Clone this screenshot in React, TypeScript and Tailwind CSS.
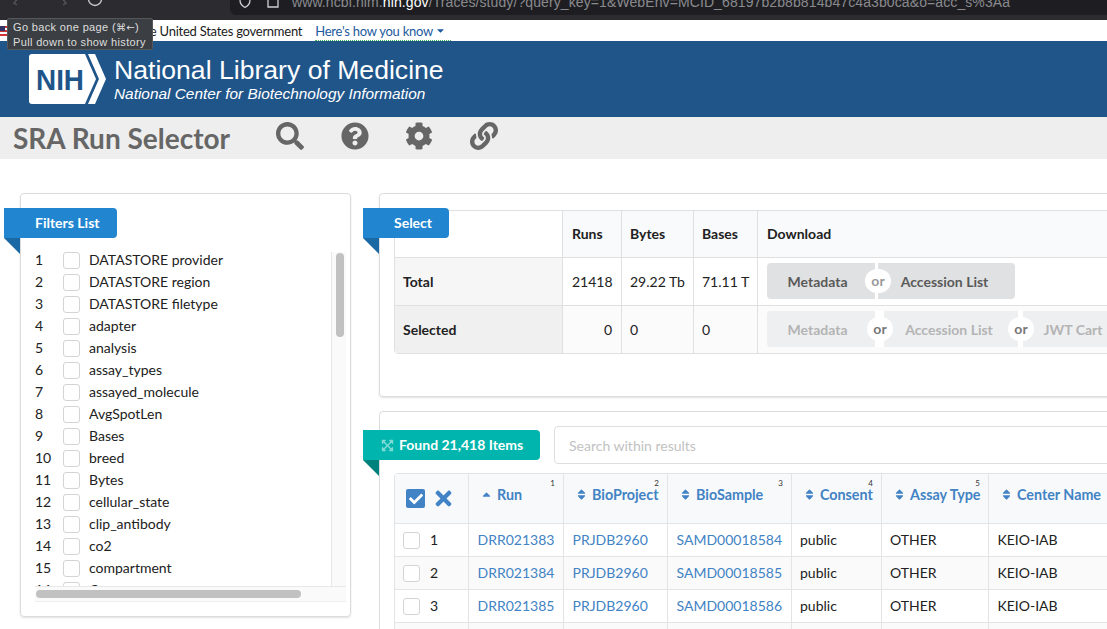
import { FaSearch, FaQuestionCircle, FaCog, FaLink, FaTimes, FaCheck, FaSort, FaSortUp, FaExpandArrowsAlt, FaCaretDown } from "react-icons/fa";

const filters = [
  "DATASTORE provider",
  "DATASTORE region",
  "DATASTORE filetype",
  "adapter",
  "analysis",
  "assay_types",
  "assayed_molecule",
  "AvgSpotLen",
  "Bases",
  "breed",
  "Bytes",
  "cellular_state",
  "clip_antibody",
  "co2",
  "compartment",
  "Consent",
];

const rows = [
  ["DRR021383", "SAMD00018584"],
  ["DRR021384", "SAMD00018585"],
  ["DRR021385", "SAMD00018586"],
  ["DRR021386", "SAMD00018587"],
];

function Check() {
  return <span className="block size-[17px] shrink-0 rounded-[3px] border border-[#d4d4d5] bg-white" />;
}

function Ribbon({ dark, bg, className, children }: { dark: string; bg: string; className: string; children: React.ReactNode }) {
  return (
    <div className={`absolute z-10 ${className}`}>
      <div className={`flex h-[30px] items-center rounded-r-[4px] text-sm font-bold text-white ${bg}`}>{children}</div>
      <div className={`h-4 w-4 [clip-path:polygon(0_0,100%_0,100%_100%)] ${dark}`} />
    </div>
  );
}

function Or({ className, dim }: { className: string; dim?: boolean }) {
  return (
    <span className={`z-10 flex h-6 w-[26px] shrink-0 items-center justify-center rounded-full bg-white text-sm ${className} ${dim ? "text-[#777]" : "text-[#999]"}`}>
      or
    </span>
  );
}

function HeadCell({ label, n, sorted }: { label: string; n?: number; sorted?: boolean }) {
  return (
    <th className="relative border-r border-[#e3e4e5] p-0 pb-[7px] text-left align-middle">
      <div className="flex items-center gap-[4px] pl-[11px] whitespace-nowrap text-[14.300px] font-bold text-[#4183c4]">
        {sorted ? <FaSortUp className="mt-[6px] size-[13px]" /> : <FaSort className="size-[13px]" />}
        {label}
      </div>
      {n && <span className="absolute top-[4px] right-[8px] text-[8px] leading-[10px] font-normal text-[#333]">{n}</span>}
    </th>
  );
}

export default function App() {
  return (
    <div className="relative h-[629px] w-[1107px] overflow-hidden bg-white font-['Lato',sans-serif] text-sm text-[#212121]">
      {/* browser chrome, cut off at the top */}
      <div className="flex h-5 items-start overflow-hidden bg-[#2b2b30]">
        <svg width="230" height="20" className="shrink-0 text-[#55555a]" fill="none" stroke="currentColor" strokeWidth="1.4">
          <path d="M20-4l-6 7 3 2" />
          <path d="M60-4l6 7-3 2" />
          <circle cx="95" cy="-1" r="6.5" stroke="#c8c8c8" />
        </svg>
        <div className="flex h-[15px] flex-1 items-start overflow-hidden rounded-bl-[6px] bg-[#1e1e22]">
          <svg width="62" height="15" className="shrink-0" fill="none" stroke="#d0d0d0" strokeWidth="1.3">
            <path d="M10-2v2c0 4 2 6 5 7.500c3-1.500 5-3.500 5-7.500v-2" />
            <path d="M38-2v9h10v-9" />
          </svg>
          <div className="-mt-[6px] whitespace-nowrap font-['Liberation_Sans',sans-serif] text-[14px] leading-[16px] tracking-[0.1px] text-[#8a8a8e]">
            www.ncbi.nlm.<span className="text-white">nih.gov</span>/Traces/study/?query_key=1&amp;WebEnv=MCID_68197b2b8b814b47c4a3b0ca&amp;o=acc_s%3Aa
          </div>
        </div>
      </div>

      {/* gov banner */}
      <div className="flex h-[21px] w-[451px] items-center justify-between bg-white pt-[1px] text-[13px] tracking-[-0.25px]">
        <svg width="8" height="10" viewBox="0 0 8 10" className="shrink-0">
          <rect width="8" height="10" fill="#c33" />
          <rect y="2" width="8" height="2" fill="#fff" />
          <rect y="6" width="8" height="2" fill="#fff" />
          <rect width="5" height="5" fill="#336" />
        </svg>
        <div className="flex items-center whitespace-nowrap">
          <span className="mr-[13px] text-[#1b1b1b]">An official website of the United States government</span>
          <span className="flex items-center gap-[2px] border-b border-dotted border-[#3fb34f] pr-[5px] leading-[18px] text-[#1d5a9e]">
            Here's how you know <FaCaretDown className="size-[11px]" />
          </span>
        </div>
      </div>

      {/* NLM header */}
      <div className="flex h-[76px] items-center bg-[#20558a] pl-[29px] font-['Liberation_Sans',sans-serif] text-white">
        <svg width="78" height="50" viewBox="0 0 78 50" className="mr-[7px] shrink-0">
          <path d="M3 0H56L67 25L56 50H3C1 50 0 49 0 47V3C0 1 1 0 3 0Z" fill="#fff" />
          <path d="M59 0H66L77 25L66 50H59L70 25Z" fill="#fff" />
          <text x="7" y="36" fontSize="30" fontWeight="700" fontFamily="Liberation Sans" fill="#20558a" textLength="48" lengthAdjust="spacingAndGlyphs">NIH</text>
        </svg>
        <div className="-mt-[1px]">
          <div className="text-[26.600px] leading-[30px] whitespace-nowrap">National Library of Medicine</div>
          <div className="text-[15.400px] leading-[18px] whitespace-nowrap italic">National Center for Biotechnology Information</div>
        </div>
      </div>

      {/* title bar */}
      <div className="flex h-[42px] items-center bg-[#eeeeee] pl-[13px] text-[#666666]">
        <h1 className="w-[263px] text-[28px] font-bold whitespace-nowrap">SRA Run Selector</h1>
        <div className="-mt-[4px] flex items-center gap-[36.500px]">
          <FaSearch className="size-[28px]" />
          <FaQuestionCircle className="size-[28px]" />
          <FaCog className="size-[28px]" />
          <FaLink className="size-[28px]" />
        </div>
      </div>

      {/* body */}
      <div className="flex items-start gap-[28px] pt-[34px] pl-5">
        <div className="relative h-[424px] w-[331px] shrink-0 rounded-[4px] border border-[#dcdcdc] shadow-[0_1px_2px_rgba(0,0,0,0.12)]">
          <Ribbon dark="bg-[#1a69a4]" bg="bg-[#2185d0] pl-[31px] pr-[17px]" className="-left-[17px] top-[14px]">Filters List</Ribbon>
          <div className="ml-[14px] mt-[58px] w-[311px]">
            <div className="flex h-[335px] w-[311px] border-b border-[#e8e8e8]">
              <div className="h-full flex-1 overflow-hidden border-r border-[#e8e8e8]">
                <div className="-mt-[3px]">
                  {filters.map((name, i) => (
                    <div key={name} className="flex h-[22px] items-center">
                      <span className="w-7">{i + 1}</span>
                      <Check />
                      <span className="ml-[9px] whitespace-nowrap">{name}</span>
                    </div>
                  ))}
                </div>
              </div>
              <div className="w-[14px] shrink-0 bg-[#fafafa] pl-[4px] pt-px">
                <div className="h-[84px] w-2 rounded-full bg-[#c1c1c1]" />
              </div>
            </div>
            <div className="h-[15px] border-b border-[#eeeeee] bg-[#fafafa] pl-px pt-[3px]">
              <div className="h-2 w-[265px] rounded-full bg-[#c1c1c1]" />
            </div>
          </div>
        </div>

        <div className="flex w-[781px] shrink-0 flex-col gap-[14px]">
          <div className="relative h-[204px] rounded-[4px] border border-[#dcdcdc] pl-[14px] pt-4 shadow-[0_1px_2px_rgba(0,0,0,0.12)]">
            <Ribbon dark="bg-[#1a69a4]" bg="bg-[#2185d0] pl-[31px] pr-[17px]" className="-left-[17px] top-[14px]">Select</Ribbon>
            <table className="w-[766px] table-fixed border-separate border-spacing-0 rounded-[4px] border border-[#dfe0e1]">
              <colgroup>
                <col className="w-[168px]" />
                <col className="w-[59px]" />
                <col className="w-[72px]" />
                <col className="w-[64px]" />
                <col />
              </colgroup>
              <tbody>
                <tr className="h-[46px] font-bold [&>td]:pb-px">
                  <td className="border-r border-[#dfe0e1]" />
                  <td className="border-r border-[#dfe0e1] bg-[#f9fafb] pl-[9px]">Runs</td>
                  <td className="border-r border-[#dfe0e1] bg-[#f9fafb] pl-2">Bytes</td>
                  <td className="border-r border-[#dfe0e1] bg-[#f9fafb] pl-2">Bases</td>
                  <td className="bg-[#f9fafb] pl-[9px]">Download</td>
                </tr>
                <tr className="h-[48px]">
                  <td className="border-t border-r border-[#dfe0e1] bg-[#f6f6f6] pl-2 font-bold">Total</td>
                  <td className="border-t border-r border-[#dfe0e1] pl-[9px]">21418</td>
                  <td className="border-t border-r border-[#dfe0e1] pl-2 whitespace-nowrap">29.22 Tb</td>
                  <td className="border-t border-r border-[#dfe0e1] pl-2 whitespace-nowrap">71.11 T</td>
                  <td className="border-t border-[#dfe0e1] pb-px pl-[9px]">
                    <div className="flex h-9 items-center font-bold text-[#5a5a5a]">
                      <span className="flex h-full w-[108px] items-center justify-center rounded-l-[4px] bg-[#e0e1e2] pt-px pr-[7px]">Metadata</span>
                      <span className="h-full w-[3px] bg-white" />
                      <Or className="-mx-[13px]" />
                      <span className="flex h-full w-[137px] items-center justify-center rounded-r-[4px] bg-[#e0e1e2] pt-px pr-[4px]">Accession List</span>
                    </div>
                  </td>
                </tr>
                <tr className="h-[48px]">
                  <td className="border-t border-r border-[#dfe0e1] bg-[#f0f0f0] pl-2 font-bold">Selected</td>
                  <td className="border-t border-r border-[#dfe0e1] bg-[#fbfbfb] pr-[9px] text-right">0</td>
                  <td className="border-t border-r border-[#dfe0e1] bg-[#fbfbfb] pl-2">0</td>
                  <td className="border-t border-r border-[#dfe0e1] bg-[#fbfbfb] pl-2">0</td>
                  <td className="border-t border-[#dfe0e1] bg-[#fbfbfb] pb-px pl-[9px]">
                    <div className="flex h-9 items-center font-bold whitespace-nowrap text-[#b4b4b5]">
                      <span className="flex h-full w-[108px] items-center justify-center rounded-l-[4px] bg-[#eeeff0] pt-px pr-[7px]">Metadata</span>
                      <span className="h-full w-[9px] bg-white" />
                      <Or dim className="-ml-[17px] -mr-[9px]" />
                      <span className="flex h-full w-[134px] items-center justify-center bg-[#eeeff0] pt-px pr-[4px]">Accession List</span>
                      <span className="h-full w-[5px] bg-white" />
                      <Or dim className="-ml-[15px] -mr-[11px]" />
                      <span className="flex h-full w-[100px] items-center justify-center rounded-r-[4px] bg-[#eeeff0] pt-px">JWT Cart</span>
                    </div>
                  </td>
                </tr>
              </tbody>
            </table>
          </div>

          <div className="relative h-[260px] rounded-[4px] border border-[#dcdcdc] pl-[14px] pt-[14px]">
            <Ribbon dark="bg-[#00827c]" bg="bg-[#00b5ad] pl-[18px] pr-[17px] gap-[5px]" className="-left-[17px] top-[18px]">
              <FaExpandArrowsAlt className="size-[13px] text-[#80dad6]" />
              Found 21,418 Items
            </Ribbon>
            <div className="ml-[160px] flex h-[38px] w-[640px] items-center rounded-[4px] border border-[#dedede] pl-[14px] pt-px text-[#c2c2c2]">
              Search within results
            </div>
            <table className="mt-[9px] w-[766px] table-fixed border-separate border-spacing-0 rounded-t-[4px] border-t border-l border-[#e3e4e5]">
              <colgroup>
                <col className="w-[74px]" />
                <col className="w-[95px]" />
                <col className="w-[104px]" />
                <col className="w-[124px]" />
                <col className="w-[90px]" />
                <col className="w-[107px]" />
                <col />
              </colgroup>
              <thead className="bg-[#f8f9fb]">
                <tr className="h-[49px]">
                  <th className="border-r border-[#e3e4e5] p-0">
                    <div className="flex items-center pl-[11px]">
                      <span className="flex size-[19px] items-center justify-center rounded-[2px] bg-[#4183c4] text-white">
                        <FaCheck className="size-[14px]" />
                      </span>
                      <FaTimes className="ml-[7px] size-[23px] text-[#4183c4]" />
                    </div>
                  </th>
                  <HeadCell label="Run" n={1} sorted />
                  <HeadCell label="BioProject" n={2} />
                  <HeadCell label="BioSample" n={3} />
                  <HeadCell label="Consent" n={4} />
                  <HeadCell label="Assay Type" n={5} />
                  <HeadCell label="Center Name" />
                </tr>
              </thead>
              <tbody>
                {rows.map(([run, sample], i) => (
                  <tr key={run} className={`h-[33px] ${i % 2 ? "bg-[#fafafa]" : ""}`}>
                    <td className="border-t border-r border-[#e3e4e5]">
                      <div className="flex items-center pl-[8px]">
                        <Check />
                        <span className="ml-[10px]">{i + 1}</span>
                      </div>
                    </td>
                    <td className="border-t border-r border-[#e3e4e5] pl-[8.500px] text-[#4183c4]">{run}</td>
                    <td className="border-t border-r border-[#e3e4e5] pl-[8.500px] text-[#4183c4]">PRJDB2960</td>
                    <td className="border-t border-r border-[#e3e4e5] pl-[8.500px] text-[#4183c4]">{sample}</td>
                    <td className="border-t border-r border-[#e3e4e5] pl-[8px]">public</td>
                    <td className="border-t border-r border-[#e3e4e5] pl-[8px]">OTHER</td>
                    <td className="border-t border-[#e3e4e5] pl-[8.500px] whitespace-nowrap">KEIO-IAB</td>
                  </tr>
                ))}
              </tbody>
            </table>
          </div>
        </div>
      </div>

      {/* back button tooltip */}
      <div className="absolute top-[18px] left-[7px] h-[32px] w-[146px] rounded-[2px] border border-[#55585b] bg-[#3b3f43] pl-[5px] pt-[1px] font-['Liberation_Sans',sans-serif] text-[11px] leading-[14px] tracking-[0.35px] whitespace-nowrap text-[#dedede]">
        <div>Go back one page (<span className="font-['DejaVu_Sans',sans-serif] text-[10px]">⌘←</span>)</div>
        <div>Pull down to show history</div>
      </div>
    </div>
  );
}
